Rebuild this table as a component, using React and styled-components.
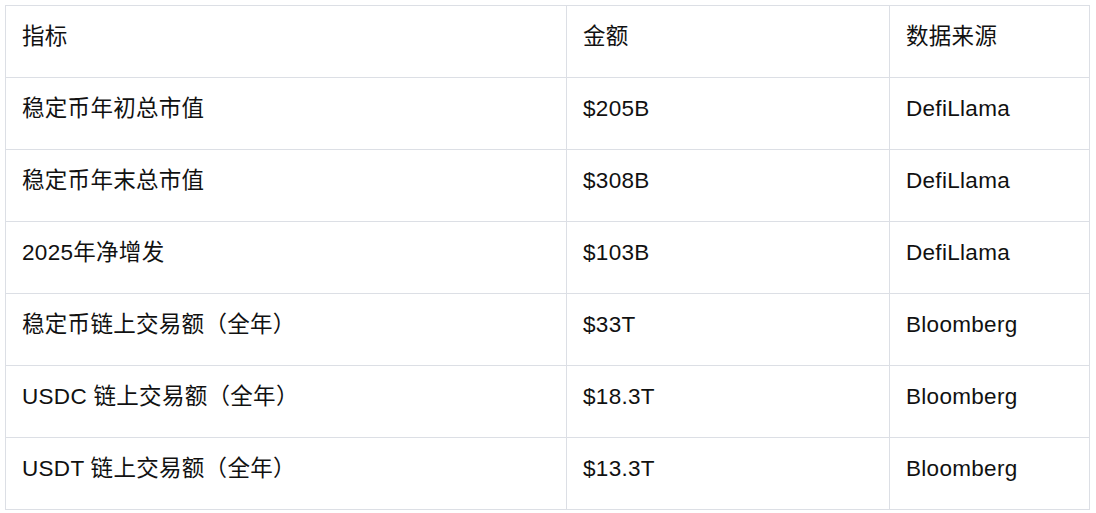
import React from "react";
import styled, { createGlobalStyle } from "styled-components";

const GlobalStyle = createGlobalStyle`
  body {
    margin: 0;
    background: #ffffff;
  }
`;

const Page = styled.div`
  padding: 5px 0 0 5px;
  font-family: "Liberation Sans", "Noto Sans CJK SC", sans-serif;
  color: #111111;
`;

const Table = styled.table`
  width: 1084px;
  border-collapse: collapse;
  table-layout: fixed;
`;

const Col = styled.col`
  width: ${(p) => p.$w}px;
`;

const Cell = styled.td`
  border: 1px solid #dcdfe5;
  height: 71px;
  box-sizing: border-box;
  padding: 16px 15px 25px 16px;
  font-size: 22.5px;
  line-height: 30px;
  letter-spacing: 0.3px;
  text-align: left;
  vertical-align: top;
  white-space: nowrap;
`;

const HeadCell = styled(Cell).attrs({ as: "th" })`
  font-weight: normal;
`;

const rows = [
  ["稳定币年初总市值", "$205B", "DefiLlama"],
  ["稳定币年末总市值", "$308B", "DefiLlama"],
  ["2025年净增发", "$103B", "DefiLlama"],
  ["稳定币链上交易额（全年）", "$33T", "Bloomberg"],
  ["USDC 链上交易额（全年）", "$18.3T", "Bloomberg"],
  ["USDT 链上交易额（全年）", "$13.3T", "Bloomberg"],
];

export default function App() {
  return (
    <Page>
      <GlobalStyle />
      <Table>
        <colgroup>
          <Col $w={561} />
          <Col $w={323} />
          <Col $w={200} />
        </colgroup>
        <thead>
          <tr>
            <HeadCell>指标</HeadCell>
            <HeadCell>金额</HeadCell>
            <HeadCell>数据来源</HeadCell>
          </tr>
        </thead>
        <tbody>
          {rows.map((r) => (
            <tr key={r[0]}>
              <Cell>{r[0]}</Cell>
              <Cell>{r[1]}</Cell>
              <Cell>{r[2]}</Cell>
            </tr>
          ))}
        </tbody>
      </Table>
    </Page>
  );
}
